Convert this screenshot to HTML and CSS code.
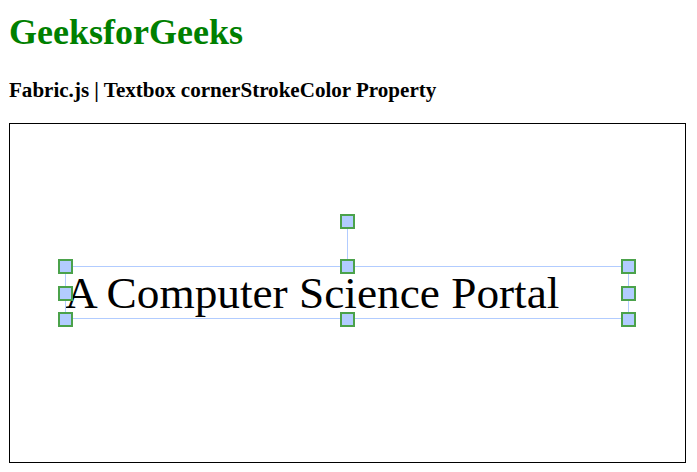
FILE: index.html
```html
<!DOCTYPE html>
<html>
<head>
<meta charset="utf-8">
<link rel="stylesheet" href="styles.css">
</head>
<body>
<h1 class="title">GeeksforGeeks</h1>
<h3 class="subtitle">Fabric.js | Textbox cornerStrokeColor Property</h3>
<div class="canvas">
  <div class="textbox">A Computer Science Portal</div>
  <div class="sel-box"></div>
  <div class="rot-line"></div>
  <div class="handle h-tl"></div>
  <div class="handle h-ml"></div>
  <div class="handle h-bl"></div>
  <div class="handle h-tm"></div>
  <div class="handle h-bm"></div>
  <div class="handle h-tr"></div>
  <div class="handle h-mr"></div>
  <div class="handle h-br"></div>
  <div class="handle h-rot"></div>
</div>
</body>
</html>
```
FILE: styles.css
```css
html, body {
  margin: 0;
  padding: 0;
  background: #fff;
}
body {
  padding: 0 9px;
  font-family: "Liberation Serif", "Times New Roman", serif;
  color: #000;
}
.title {
  margin: 12px 0 0;
  font-size: 36px;
  line-height: 41px;
  font-weight: bold;
  color: green;
}
.subtitle {
  margin: 25px 0 21px;
  font-size: 21.06px;
  line-height: 24px;
  font-weight: bold;
}
.canvas {
  position: relative;
  width: 675px;
  height: 338px;
  border: 1px solid #000;
  overflow: hidden;
}
.textbox {
  position: absolute;
  left: 55px;
  top: 142px;
  width: 564px;
  height: 53px;
  font-size: 45.3px;
  line-height: 54px;
  white-space: nowrap;
  color: #000;
}
.sel-box {
  position: absolute;
  left: 55px;
  top: 142px;
  width: 564px;
  height: 53px;
  box-sizing: border-box;
  border: 1px solid rgb(178, 204, 255);
}
.rot-line {
  position: absolute;
  left: 337px;
  top: 104px;
  width: 1px;
  height: 38px;
  background: rgb(178, 204, 255);
}
.handle {
  position: absolute;
  width: 15px;
  height: 15px;
  box-sizing: border-box;
  background: rgb(178, 204, 255);
  border: 2px solid #4ba24b;
  margin: -7px 0 0 -7px;
}
.h-tl { left: 55px; top: 142px; }
.h-ml { left: 55px; top: 168.5px; }
.h-bl { left: 55px; top: 195px; }
.h-tm { left: 337px; top: 142px; }
.h-bm { left: 337px; top: 195px; }
.h-tr { left: 618px; top: 142px; }
.h-mr { left: 618px; top: 168.5px; }
.h-br { left: 618px; top: 195px; }
.h-rot { left: 337px; top: 97px; }
```
